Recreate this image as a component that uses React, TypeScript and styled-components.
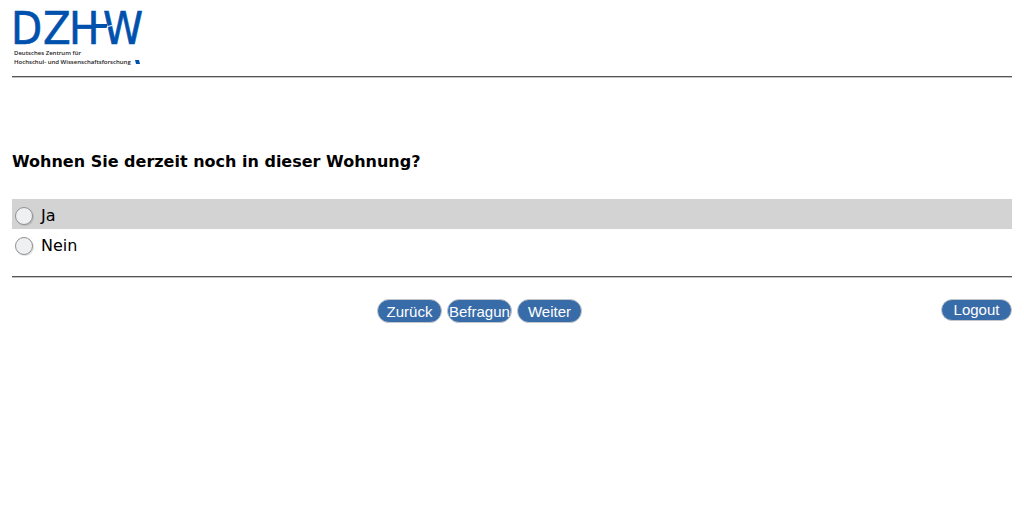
import React from "react";
import styled, { createGlobalStyle } from "styled-components";

const GlobalStyle = createGlobalStyle`
  * { box-sizing: border-box; }
  body {
    margin: 0;
    background: #fff;
    color: #000;
    font-family: Verdana, "DejaVu Sans", sans-serif;
    font-size: 16px;
  }
`;

const Page = styled.div`
  padding: 8px 12px;
`;

const Header = styled.header`
  height: 68px;
`;

const Logo = styled.svg`
  display: block;
  overflow: visible;
`;

const Rule = styled.hr`
  height: 2px;
  margin: 0;
  border: 0;
  border-top: 1px solid #555;
  border-bottom: 1px solid #c4c4c4;
`;

const Questions = styled.fieldset`
  margin: 0;
  padding: 73px 0 17px;
  border: 0;
  min-width: 0;
`;

const Question = styled.legend`
  float: left;
  width: 100%;
  padding: 0;
  margin-bottom: 26px;
  font-weight: bold;
  line-height: 22px;
`;

const Option = styled.label<{ $shaded?: boolean }>`
  clear: both;
  display: flex;
  align-items: center;
  gap: 8px;
  height: 30px;
  padding: 4px 3px 0;
  background: ${(p) => (p.$shaded ? "#d3d3d3" : "transparent")};
`;

const OptionText = styled.span`
  padding-bottom: 2px;
`;

const Radio = styled.input`
  appearance: none;
  width: 18px;
  height: 18px;
  margin: 0;
  border: 1px solid #8e9194;
  border-radius: 50%;
  background: #eff0f2;
  box-shadow: 1px 1px 1px rgba(0, 0, 0, 0.12);
  &:checked { box-shadow: inset 0 0 0 4px #eff0f2; background: #333; }
`;

const Actions = styled.div`
  display: grid;
  grid-template-columns: 1fr auto 1fr;
  align-items: start;
  padding-top: 21px;
`;

const Navigation = styled.nav`
  grid-column: 2;
  display: flex;
  gap: 5px;
  margin-right: 65px;
`;

const Button = styled.button<{ $wide?: boolean; $overflowing?: boolean }>`
  width: ${(p) => (p.$wide ? 71 : 65)}px;
  height: ${(p) => (p.$wide ? 22 : 24)}px;
  padding: ${(p) => (p.$wide ? "0 1px" : "2px 1px 0")};
  overflow: hidden;
  border: 1px solid #c3c7cc;
  border-radius: 12px;
  background: #386ca8;
  color: #fff;
  font: 15px/20px "Liberation Sans", Arial, sans-serif;
  white-space: nowrap;
  text-align: ${(p) => (p.$overflowing ? "left" : "center")};
`;

const LogoutCell = styled.div`
  grid-column: 3;
  display: flex;
  justify-content: flex-end;
`;

function DzhwLogo() {
  return (
    <Logo width="136" height="60" viewBox="0 0 136 60" role="img" aria-label="DZHW">
      <g
        fill="#0051ad"
        stroke="#0051ad"
        strokeWidth="0.6"
        fontFamily="'DejaVu Sans Condensed', 'DejaVu Sans', sans-serif"
        fontSize="45"
      >
        <text x="-1" y="36">D</text>
        <text x="31" y="36">Z</text>
        <text x="57" y="36">H</text>
        <text x="91" y="36">W</text>
      </g>
      <path d="M80 16H95V20H80Z" fill="#0051ad" />
      <path d="M91 21H94.500L95.500 18.500L100 17.500" stroke="#fff" strokeWidth="1" fill="none" />
      <g fill="#222" fontFamily="'Open Sans', sans-serif" fontSize="6" fontWeight="600">
        <text x="2" y="47">Deutsches Zentrum für</text>
        <text x="2" y="56">Hochschul- und Wissenschaftsforschung</text>
      </g>
      <path d="M123 52H127L128 56H124Z" fill="#0051ad" />
    </Logo>
  );
}

export default function App() {
  return (
    <Page>
      <GlobalStyle />
      <Header>
        <DzhwLogo />
      </Header>
      <Rule />
      <form onSubmit={(e) => e.preventDefault()}>
        <Questions>
          <Question>Wohnen Sie derzeit noch in dieser Wohnung?</Question>
          <Option $shaded>
            <Radio type="radio" name="wohnung" value="ja" />
            <OptionText>Ja</OptionText>
          </Option>
          <Option>
            <Radio type="radio" name="wohnung" value="nein" />
            <OptionText>Nein</OptionText>
          </Option>
        </Questions>
        <Rule />
        <Actions>
          <Navigation>
            <Button type="button">Zurück</Button>
            <Button type="button" $overflowing>Befragung</Button>
            <Button type="submit">Weiter</Button>
          </Navigation>
          <LogoutCell>
            <Button type="button" $wide>Logout</Button>
          </LogoutCell>
        </Actions>
      </form>
    </Page>
  );
}
